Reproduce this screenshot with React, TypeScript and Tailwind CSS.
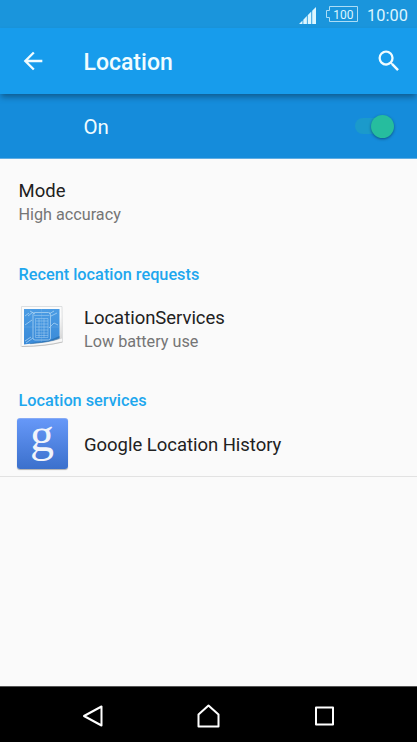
import type { ReactNode } from "react";

function StatusBar() {
  return (
    <div className="flex h-7 shrink-0 items-center justify-end bg-[#1a95dc] pt-[1px] pr-[9px] text-[#dcf6ff]">
      <svg className="mt-[1px]" width="18" height="18" viewBox="0 0 18 18" fill="currentColor">
        <path d="M0 18 3.500 14.500V18ZM4.300 13.700 7.900 10V18H4.300ZM8.700 9.300 12.300 5.500V18H8.700ZM13.200 4.800 17 1V18H13.200Z" />
      </svg>
      <div className="relative mb-[1px] ml-[9px] flex h-4 w-8 items-center justify-center">
        <svg className="absolute inset-0" width="32" height="16" viewBox="0 0 32 16" fill="none" stroke="currentColor" opacity="0.75">
          <path d="M3.500 .5H31.500V15.500H3.500V11.500H.5V4.500H3.500Z" />
        </svg>
        <span className="pt-[1px] pl-[3px] text-[12px] leading-none tracking-[0.1px]">100</span>
      </div>
      <span className="mt-[3px] ml-[9px] text-[16.3px] leading-none tracking-[0.1px]">10:00</span>
    </div>
  );
}

function BackIcon() {
  return (
    <svg width="28" height="28" viewBox="0 0 24 24" fill="currentColor">
      <path d="M20 11H7.83l5.59-5.59L12 4l-8 8 8 8 1.41-1.41L7.83 13H20v-2z" />
    </svg>
  );
}

function SearchIcon() {
  return (
    <svg width="28" height="28" viewBox="0 0 24 24" fill="currentColor">
      <path d="M15.5 14h-.79l-.28-.27A6.471 6.471 0 0 0 16 9.5 6.5 6.5 0 1 0 9.5 16c1.61 0 3.09-.59 4.23-1.57l.27.28v.79l5 4.99L20.49 19l-4.99-5zm-6 0C7.01 14 5 11.99 5 9.5S7.01 5 9.5 5 14 7.01 14 9.5 11.99 14 9.5 14z" />
    </svg>
  );
}

function BlueprintIcon() {
  return (
    <svg className="mb-[2px]" width="44" height="44" viewBox="0 0 44 44">
      <defs>
        <linearGradient id="sheet" x1="0" y1="0" x2="0" y2="1">
          <stop offset="0" stopColor="#4b9ce4" />
          <stop offset="1" stopColor="#3a8ad8" />
        </linearGradient>
        <linearGradient id="curl" x1="0" y1="0" x2="1" y2="1">
          <stop offset="0.6" stopColor="#fbfbfb" />
          <stop offset="1" stopColor="#c8c8c8" />
        </linearGradient>
      </defs>
      <path d="M1.500 1.500H42L42.500 37Q25 41.500 1 41.500Z" fill="url(#curl)" stroke="#d6d8d9" strokeWidth="0.8" />
      <path d="M4 4H39.500V33Q28 37.500 16 38L4 39.500Z" fill="url(#sheet)" />
      <path d="M10 38.200Q29 36.500 39.500 31V34Q27 38.500 10 39.500Z" fill="#2266a3" opacity="0.6" />
      <path d="M8 39.500Q30 38 42 33.500L42.300 37Q25 41 8 41.200Z" fill="#f7f7f7" />
      <path d="M2 41.500Q26 41 42.500 37" fill="none" stroke="#b8b8b8" strokeWidth="0.8" />
      <g fill="none" stroke="#c4e2f8" strokeWidth="0.8" opacity="0.8">
        <rect x="13" y="7.500" width="17.500" height="27.500" rx="2" />
        <path d="M14 10.500H29.500M15.500 13.500H28V32.500H15.500ZM16 16H28M16 19H28M16 22H28M16 25H28M16 28H28M16 30.500H28M19 13.500V32.500M24 13.500V32.500" strokeWidth="0.5" />
        <path d="M5 11 9 8M8 11 13 7M5 20 12 15M5 36 11 32M6 38 13 33M29 9 34 6M31 11 37 8M29 23 34 18 38 20M10 6 15 9" />
      </g>
      <path d="M4 22H39.500M21.500 4V37" stroke="#8dc1ea" strokeWidth="0.5" opacity="0.5" />
    </svg>
  );
}

function GoogleIcon() {
  return (
    <div className="flex size-[51px] justify-center rounded-[3px] border-t border-[#86aaf5] bg-linear-to-b from-[#6698f8] to-[#3b70cc] shadow-[0_1px_1px_rgba(0,0,0,0.3)]">
      <span className="font-['Liberation_Serif',serif] text-[48px] leading-[32px] text-[#f1f4fb]">g</span>
    </div>
  );
}

function SectionTitle({ children }: { children: ReactNode }) {
  return (
    <h2 className="flex h-10 items-end px-[18.500px] text-[16.3px] leading-5 font-medium text-[#1ea7ee]">
      {children}
    </h2>
  );
}

function ServiceRow({ icon, title, summary }: { icon: ReactNode; title: string; summary?: string }) {
  return (
    <div className="flex flex-1 items-center">
      <div className="flex w-[84px] justify-center">{icon}</div>
      <div className="pt-[3px]">
        <p className="text-[18.500px] leading-6 tracking-[-0.03px] text-[#212121]">{title}</p>
        {summary && <p className="text-[16.2px] leading-6 text-[#757575]">{summary}</p>}
      </div>
    </div>
  );
}

export default function App() {
  return (
    <div className="flex h-[742px] w-[417px] flex-col overflow-hidden bg-[#fafafa] font-['Roboto',sans-serif]">
      <StatusBar />

      {/* App bar */}
      <header className="z-10 flex h-[66px] shrink-0 items-center bg-[#179cec] pl-[18.500px] text-[#f0fcff] shadow-[0_4px_6px_-1px_rgba(0,0,0,0.35)]">
        <BackIcon />
        <h1 className="ml-[37px] flex-1 pt-[3px] text-[23px] leading-7 font-medium">Location</h1>
        <div className="mr-[14px]">
          <SearchIcon />
        </div>
      </header>

      {/* Main switch */}
      <div className="flex h-[65px] shrink-0 items-center justify-between border-b border-[#5fade3] bg-[#158cdb] pr-[23px] pl-[83.500px] text-[#f0fcff]">
        <span className="pt-[1px] text-[20.500px] leading-6">On</span>
        <div className="flex h-4 w-[39px] items-center justify-end rounded-full bg-[#1b9acb]">
          <div className="size-[23px] shrink-0 rounded-full bg-[#26bd9e] shadow-[0_1px_3px_rgba(0,0,0,0.4)]" />
        </div>
      </div>

      <main className="flex-1">
        <div className="h-[86px] px-[18.500px] pt-5">
          <p className="text-[18.500px] leading-6 text-[#212121]">Mode</p>
          <p className="text-[16.2px] leading-6 text-[#757575]">High accuracy</p>
        </div>

        <SectionTitle>Recent location requests</SectionTitle>
        <div className="flex h-[86px]">
          <ServiceRow icon={<BlueprintIcon />} title="LocationServices" summary="Low battery use" />
        </div>

        <SectionTitle>Location services</SectionTitle>
        <div className="flex h-[66px] border-b border-[#e2e2e2]">
          <ServiceRow icon={<GoogleIcon />} title="Google Location History" />
        </div>
      </main>

      {/* Navigation bar */}
      <nav className="flex h-14 shrink-0 items-center justify-between border-t border-[#555] bg-black pt-[3px] pr-[83px] pl-[82px] text-white">
        <svg width="22" height="24" viewBox="0 0 22 24" fill="none" stroke="currentColor" strokeWidth="2" strokeLinejoin="round">
          <path d="M19.500 2.500V21.500L2 12Z" />
        </svg>
        <svg width="24" height="24" viewBox="0 0 24 24" fill="none" stroke="currentColor" strokeWidth="2" strokeLinejoin="round">
          <path d="M11.500 1.500 21.500 10.500V22.500H1.500V10.500Z" />
        </svg>
        <svg width="20" height="20" viewBox="0 0 20 20" fill="none" stroke="currentColor" strokeWidth="2" strokeLinejoin="round">
          <path d="M2 1.500H19V18.500H2Z" />
        </svg>
      </nav>
    </div>
  );
}
